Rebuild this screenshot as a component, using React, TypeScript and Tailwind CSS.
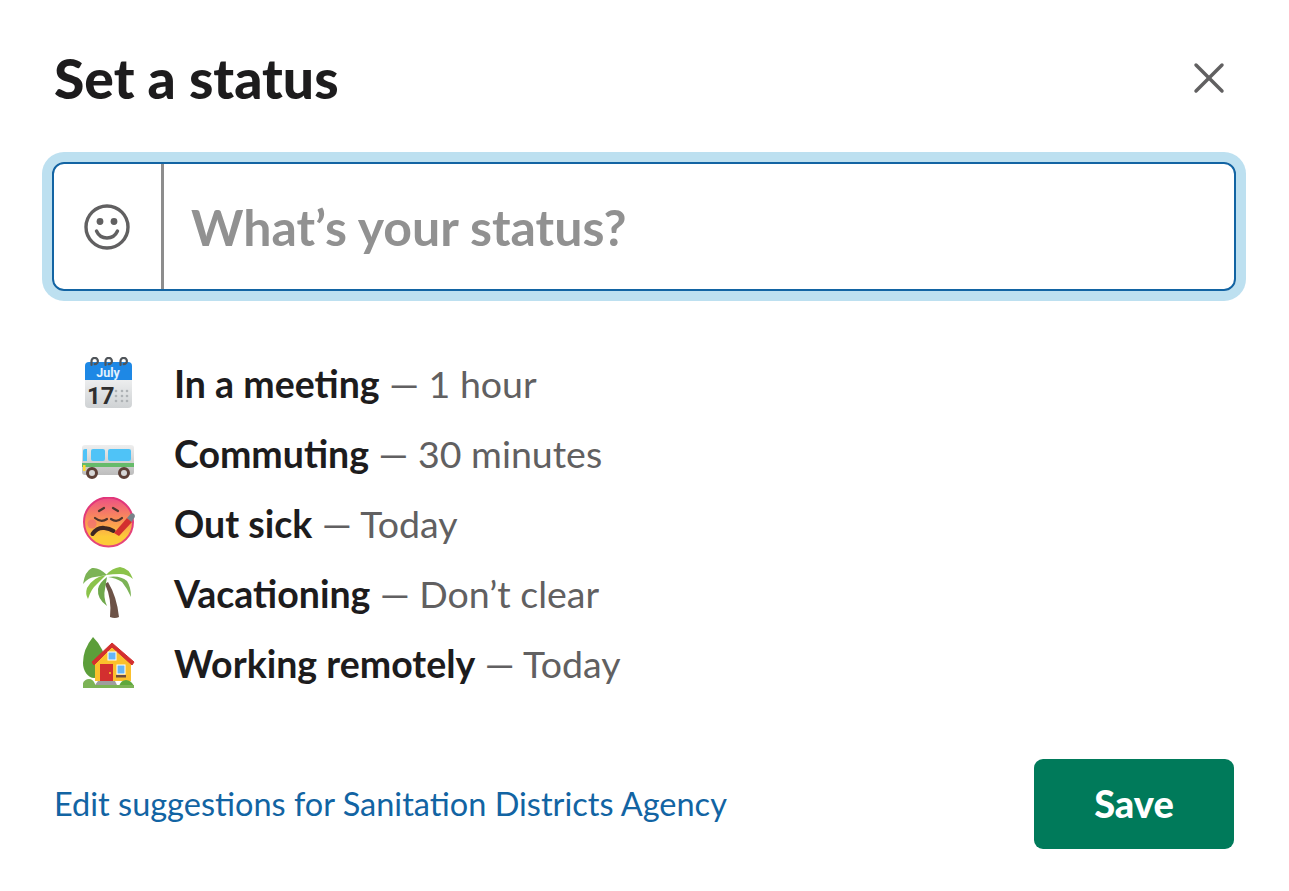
import { X } from "lucide-react";

function CalendarIcon() {
  return (
    <svg viewBox="0 0 54 54" className="w-[54px] h-[54px]">
      <defs>
        <linearGradient id="calBody" x1="0" y1="0" x2="0" y2="1">
          <stop offset="0" stopColor="#ffffff" />
          <stop offset="1" stopColor="#cfd2d4" />
        </linearGradient>
      </defs>
      <rect x="4" y="5" width="47" height="46" rx="4" fill="url(#calBody)" />
      <path d="M4 23V9a4 4 0 0 1 4-4h39a4 4 0 0 1 4 4v14z" fill="#1e88e5" />
      <g fill="none" stroke="#50555a" strokeWidth="2.200" strokeLinecap="round">
        <path d="M10.500 8V4a3.200 3.200 0 1 1 3.200 3.200" />
        <path d="M24.500 8V4a3.200 3.200 0 1 1 3.200 3.200" />
        <path d="M39.500 8V4a3.200 3.200 0 1 1 3.200 3.200" />
      </g>
      <text x="27" y="20" textAnchor="middle" fontFamily="Roboto, sans-serif" fontWeight="700" fontSize="12.500" fill="#e3f2fd">July</text>
      <text x="6" y="47" fontFamily="Roboto, sans-serif" fontWeight="700" fontSize="24" fill="#2f2f2f">17</text>
      <g fill="#aeb2b5">
        <circle cx="35" cy="34" r="1.300" /><circle cx="41" cy="34" r="1.300" /><circle cx="46" cy="34" r="1.300" />
        <circle cx="35" cy="39" r="1.300" /><circle cx="41" cy="39" r="1.300" /><circle cx="46" cy="39" r="1.300" />
        <circle cx="35" cy="44" r="1.300" /><circle cx="41" cy="44" r="1.300" /><circle cx="46" cy="44" r="1.300" />
      </g>
    </svg>
  );
}

function BusIcon() {
  return (
    <svg viewBox="0 0 54 54" className="w-[54px] h-[54px]">
      <defs>
        <linearGradient id="busBody" x1="0" y1="0" x2="0" y2="1">
          <stop offset="0" stopColor="#eeeeee" />
          <stop offset="1" stopColor="#bdbdbd" />
        </linearGradient>
      </defs>
      <rect x="1" y="18" width="52" height="30" rx="3" fill="url(#busBody)" />
      <rect x="1" y="36" width="52" height="4" fill="#66bb6a" />
      <path d="M2 24a2 2 0 0 1 2-2h2v12H2z" fill="#4fc3f7" />
      <rect x="10" y="22" width="14" height="12" rx="2" fill="#4fc3f7" />
      <rect x="27" y="22" width="23" height="12" rx="2" fill="#4fc3f7" />
      <rect x="2" y="38" width="2.500" height="6" fill="#fdd835" />
      <circle cx="11" cy="46" r="4.500" fill="#d6d6d6" stroke="#5d4037" strokeWidth="3" />
      <circle cx="43" cy="46" r="4.500" fill="#d6d6d6" stroke="#5d4037" strokeWidth="3" />
    </svg>
  );
}

function SickIcon() {
  return (
    <svg viewBox="0 0 54 54" className="w-[54px] h-[54px]">
      <defs>
        <linearGradient id="sickFace" x1="0" y1="0" x2="0" y2="1">
          <stop offset="0" stopColor="#ec4f85" />
          <stop offset="0.45" stopColor="#fa8f58" />
          <stop offset="0.8" stopColor="#fdcb38" />
        </linearGradient>
        <linearGradient id="sickRim" x1="0" y1="0" x2="0" y2="1">
          <stop offset="0" stopColor="#e0357a" />
          <stop offset="1" stopColor="#e5477a" />
        </linearGradient>
      </defs>
      <circle cx="27.500" cy="25" r="24.500" fill="url(#sickFace)" stroke="url(#sickRim)" strokeWidth="2" />
      <circle cx="11" cy="27" r="4.500" fill="#f0647a" opacity="0.6" />
      <g fill="none" stroke="#4e342e" strokeWidth="2.200" strokeLinecap="round">
        <path d="M18 14l5-3" />
        <path d="M37 14l-5-3" />
        <path d="M14 21q6 5 12 1" />
        <path d="M30 22q6 4 11-1" />
      </g>
      <path d="M11.500 37q5-7 12-6q5 .5 9 3" fill="none" stroke="#3e2723" strokeWidth="4" strokeLinecap="round" />
      <path d="M33 36l13-15 5 4-13 14z" fill="#d32f2f" />
      <path d="M46 21l3.500-4q2-1.500 3.500 0t.5 3.500l-3 4.500z" fill="#78828a" />
    </svg>
  );
}

function PalmIcon() {
  return (
    <svg viewBox="0 0 54 54" className="w-[54px] h-[54px]">
      <path d="M27 15q9 15 11 35q-4 2-9 0q2-18-5-33z" fill="#6d5347" />
      <path d="M26 8Q18 0 11 1Q4 4 2 17Q8 10 14 10q6-1 12-2z" fill="#7cb356" />
      <path d="M25 8Q12 10 6 21q-2 6 1 11q3-10 9-15q4-4 9-9z" fill="#8bc34a" />
      <path d="M26 10q-8 6-9 12q-1 10 9 17q-4-9-2-17q1-6 2-12z" fill="#6fa84c" />
      <path d="M25 8q6-7 14-8q9 1 13 12q-6-5-13-5q-7 0-14 1z" fill="#8bc34a" />
      <path d="M27 10q12-2 19 4q4 6 4 16q-4-9-9-15q-6-4-14-5z" fill="#7cb356" />
    </svg>
  );
}

function HouseIcon() {
  return (
    <svg viewBox="0 0 54 54" className="w-[54px] h-[54px]">
      <path d="M12 0Q2 12 2 26c0 8 5 15 11 15s11-7 11-15Q24 12 12 0z" fill="#5c9e3a" />
      <path d="M14 44h36V24L31 9 14 24z" fill="#fbc02d" />
      <path d="M11 25L31 6l22 19-2 3L31 10 13 28z" fill="#d32f2f" stroke="#d32f2f" strokeLinejoin="round" />
      <rect x="19" y="27" width="13" height="17" fill="#d32f2f" />
      <circle cx="29" cy="36" r="1" fill="#ffca28" />
      <rect x="27" y="15" width="8" height="8" fill="#64b5f6" stroke="#fff" strokeWidth="1" />
      <rect x="36" y="28" width="8" height="9" fill="#64b5f6" stroke="#fff" strokeWidth="1" />
      <rect x="35" y="38" width="10" height="2.500" fill="#6d4c41" />
      <path d="M17 44h17l2 4H14z" fill="#9e9e9e" />
      <path d="M2 51v-5q2-4 6-4t6 5v4z" fill="#7cb356" />
      <path d="M38 49q2-6 7-6t8 6z" fill="#5fa83c" />
      <rect x="2" y="48" width="51" height="3" fill="#7cb356" />
    </svg>
  );
}

const statuses = [
  { icon: <CalendarIcon />, name: "In a meeting", time: "1 hour" },
  { icon: <BusIcon />, name: "Commuting", time: "30 minutes" },
  { icon: <SickIcon />, name: "Out sick", time: "Today" },
  { icon: <PalmIcon />, name: "Vacationing", time: "Don’t clear" },
  { icon: <HouseIcon />, name: "Working remotely", time: "Today" },
];

export default function App() {
  return (
    <div className="w-[1289px] h-[891px] overflow-hidden bg-white pl-[52px] pr-[53px] pt-[46px] font-['Lato',sans-serif]">
      {/* Header */}
      <div className="flex items-center justify-between h-[64px] pl-[2px]">
        <h1 className="text-[55.200px] leading-[64px] font-black text-[#1d1c1d]">Set a status</h1>
        <X size={52} strokeWidth={1.6} className="text-[#616061] mr-[1px]" />
      </div>

      {/* Input */}
      <div className="mt-[52px] flex h-[129px] rounded-[12px] border-2 border-[#1264a3] shadow-[0_0_0_10px_#bde0f0]">
        <div className="w-[110px] pr-[2px] flex items-center justify-center border-r-[3px] border-[#8d8d8d]">
          <svg viewBox="0 0 46 46" className="w-[46px] h-[46px]" fill="none" stroke="#616061" strokeWidth="3.400">
            <circle cx="23" cy="23" r="21" />
            <circle cx="16" cy="17.500" r="3.400" fill="#616061" stroke="none" />
            <circle cx="30" cy="17.500" r="3.400" fill="#616061" stroke="none" />
            <path d="M12.500 27c2 4.500 6 7 10.500 7s8.500-2.500 10.500-7" strokeLinecap="round" />
          </svg>
        </div>
        <div className="flex items-center pl-[27px] pt-[2px] text-[50px] font-bold text-[#919191]">What’s your status?</div>
      </div>

      {/* Suggestions */}
      <div className="mt-[58px] pl-[29px] flex flex-col">
        {statuses.map((s) => (
          <div key={s.name} className="flex items-center h-[70px]">
            <div className="w-[54px] h-[54px] shrink-0">{s.icon}</div>
            <div className="ml-[39px] text-[37.500px] text-[#616061]">
              <span className="font-bold text-[#1d1c1d]">{s.name}</span> — {s.time}
            </div>
          </div>
        ))}
      </div>

      {/* Footer */}
      <div className="mt-[60px] pl-[2px] pr-[2px] flex items-center justify-between">
        <span className="text-[32.500px] text-[#1264a3]">Edit suggestions for Sanitation Districts Agency</span>
        <button className="w-[200px] h-[90px] pb-[2px] rounded-[9px] bg-[#007a5a] text-white text-[38px] font-black">Save</button>
      </div>
    </div>
  );
}
